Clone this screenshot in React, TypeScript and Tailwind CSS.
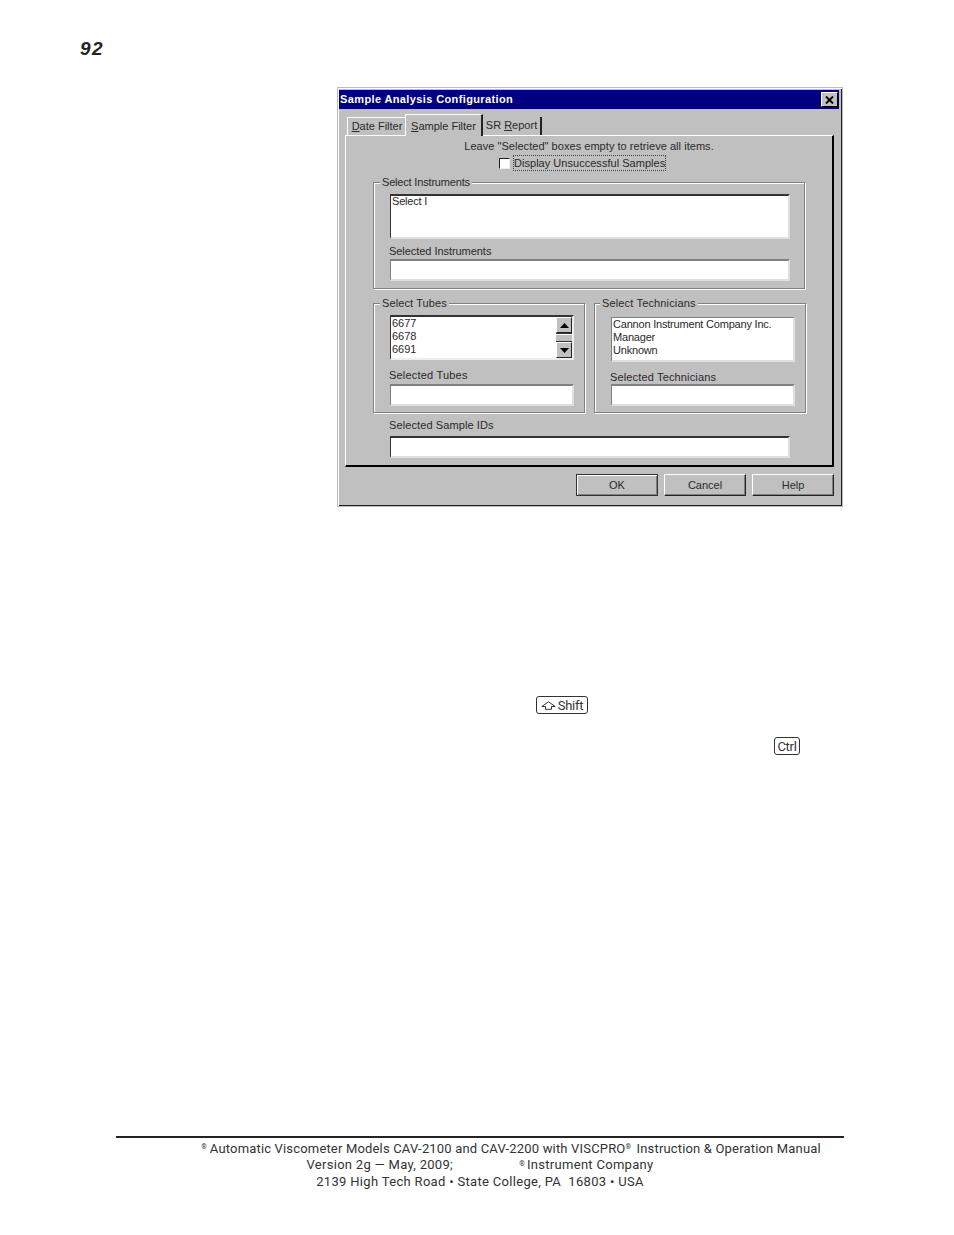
import type { ReactNode } from 'react';

const uiFont = "font-['Liberation_Sans',Arial,sans-serif]";

function Sunken({ className, children }: { className: string; children?: ReactNode }) {
  return (
    <div className={`bg-white border-t-2 border-l border-r-2 border-b-2 border-t-[#333] border-l-[#333] border-r-[#dfdfdf] border-b-[#dfdfdf] overflow-hidden ${className}`}>
      {children}
    </div>
  );
}

function Group({ title, className, legendClass = 'left-[6px]', children }: { title: string; className: string; legendClass?: string; children: ReactNode }) {
  return (
    <div className={`relative border border-[#808080] shadow-[inset_1px_1px_0_#fff,1px_1px_0_#fff] ${className}`}>
      <span className={`absolute -top-[7px] bg-[#c0c0c0] px-[2px] leading-[13px] whitespace-nowrap ${legendClass}`}>{title}</span>
      {children}
    </div>
  );
}

function DlgButton({ label, primary }: { label: string; primary?: boolean }) {
  return (
    <button
      className={`w-[82px] h-[22px] flex items-center justify-center bg-[#c0c0c0] border ${primary ? 'border-[#333] shadow-[inset_1px_1px_0_#fff,inset_-1px_-1px_0_#808080]' : 'border-t-[#fff] border-l-[#fff] border-r-[#222] border-b-[#222] shadow-[inset_-1px_-1px_0_#808080]'}`}
    >
      {label}
    </button>
  );
}

function ScrollBtn({ up }: { up?: boolean }) {
  return (
    <div className="w-[16px] h-[16px] bg-[#c0c0c0] border border-t-white border-l-white border-r-[#222] border-b-[#222] flex items-center justify-center">
      <svg width="9" height="5" viewBox="0 0 9 5" fill="#000">
        <path d={up ? 'M4.5 0 9 5H0z' : 'M0 0h9L4.5 5z'} />
      </svg>
    </div>
  );
}

function Dialog() {
  return (
    <div className={`ml-[337px] mt-[25px] w-[506px] h-[420px] flex flex-col bg-[#c0c0c0] border border-[#bbb] p-[1px] shadow-[inset_1px_1px_0_#fff,inset_-1px_-1px_0_#222] text-[11px] leading-[13px] text-[#2a2a2a] ${uiFont}`}>
      {/* Title bar */}
      <div className="mt-[1px] h-[19px] mr-[2px] flex items-center justify-between bg-[#000080] pl-[1px] pr-[1px]">
        <span className="text-white font-bold tracking-[0.38px]">Sample Analysis Configuration</span>
        <div className="w-[17px] h-[15px] bg-[#c0c0c0] border border-t-white border-l-white border-r-black border-b-black flex items-center justify-center">
          <svg width="9" height="8" viewBox="0 0 9 8" stroke="#000" strokeWidth="1.8">
            <path d="M1 0.5 8 7.5M8 0.5 1 7.5" />
          </svg>
        </div>
      </div>

      {/* Tabs */}
      <div className="ml-[6px] h-[26px] flex items-end relative z-10">
        <div className="ml-[2px] w-[58px] h-[18px] pb-[1px] pl-[1px] flex items-center justify-center border-t border-l border-white whitespace-nowrap">
          <span><span className="underline">D</span>ate Filter</span>
        </div>
        <div className="w-[78px] h-[22px] -mb-[1px] pt-[2px] flex items-center justify-center bg-[#c0c0c0] border-t border-l border-white border-r-2 border-r-[#222] whitespace-nowrap">
          <span><span className="underline">S</span>ample Filter</span>
        </div>
        <div className="w-[59px] h-[18px] pb-[1px] flex items-center justify-center border-r-2 border-r-[#222] whitespace-nowrap">
          <span>SR <span className="underline">R</span>eport</span>
        </div>
      </div>

      {/* Panel */}
      <div className="ml-[6px] w-[489px] h-[332px] border-t border-l border-white border-r-2 border-b-2 border-r-black border-b-black flex flex-col">
        <p className="mt-[4px] text-center tracking-[0.04px]">Leave "Selected" boxes empty to retrieve all items.</p>
        <div className="mt-[2px] ml-[153px] flex items-center gap-[3px]">
          <div className="w-[11px] h-[11px] bg-white border border-t-[#222] border-l-[#222] border-r-[#eee] border-b-[#eee]" />
          <span className="border border-dotted border-[#444] h-[16px] leading-[15px] tracking-[0.03px] whitespace-nowrap">Display Unsuccessful Samples</span>
        </div>

        <Group title="Select Instruments" className="ml-[27px] mt-[11px] w-[432px] h-[107px] pl-[16px] pt-[11px] tracking-[-0.18px]">
          <Sunken className="w-[400px] h-[45px] pl-[1px] leading-[11px]">Select I</Sunken>
          <p className="-ml-[1px] mt-[5px] h-[15px] leading-[15px] tracking-[-0.05px]">Selected Instruments</p>
          <Sunken className="w-[400px] h-[22px] !border-t-[#808080] !border-l-[#808080]" />
        </Group>

        <div className="ml-[27px] mt-[14px] flex gap-[9px]">
          <Group title="Select Tubes" className="w-[212px] h-[110px] pl-[16px] pt-[11px] tracking-[0.1px]">
            <Sunken className="w-[184px] h-[45px] flex !border-r-[#eee] !border-b-[#eee]">
              <div className="flex-1 pl-[1px] leading-[13px] tracking-[0px] overflow-hidden">
                <div>6677</div>
                <div>6678</div>
                <div>6691</div>
                <div>6715</div>
              </div>
              <div className="w-[16px] flex flex-col">
                <ScrollBtn up />
                <div className="flex-1 bg-[#c0c0c0] border-t border-b border-[#333] border-b-dotted shadow-[inset_0_1px_0_#fff]" />
                <ScrollBtn />
              </div>
            </Sunken>
            <p className="-ml-[1px] mt-[8px] h-[14px] leading-[15px] tracking-[0.2px]">Selected Tubes</p>
            <Sunken className="w-[184px] h-[22px] mt-[2px] !border-t-[#808080] !border-l-[#808080]" />
          </Group>
          <Group title="Select Technicians" legendClass="left-[5px]" className="w-[212px] h-[110px] pl-[16px] pt-[13px] tracking-[0.15px]">
            <Sunken className="w-[184px] h-[45px] pl-[1px] !border-t !border-t-[#808080] !border-l-[#808080] tracking-[-0.2px]">
              <div>Cannon Instrument Company Inc.</div>
              <div>Manager</div>
              <div>Unknown</div>
            </Sunken>
            <p className="-ml-[1px] mt-[8px] h-[14px] leading-[15px] tracking-[0.15px]">Selected Technicians</p>
            <Sunken className="w-[184px] h-[22px] !border-t-[#808080] !border-l-[#808080]" />
          </Group>
        </div>

        <p className="ml-[43px] mt-[5px] h-[15px] leading-[15px] tracking-[0.1px]">Selected Sample IDs</p>
        <Sunken className="ml-[44px] mt-[3px] w-[400px] h-[22px]" />
      </div>

      {/* Buttons */}
      <div className="mt-[7px] ml-[237px] flex gap-[6px]">
        <DlgButton label="OK" primary />
        <DlgButton label="Cancel" />
        <DlgButton label="Help" />
      </div>
    </div>
  );
}

export default function App() {
  return (
    <div className={`w-[954px] h-[1235px] bg-white flex flex-col overflow-hidden ${uiFont}`}>
      <p className="ml-[80px] mt-[39px] h-[23px] text-[19px] leading-[19px] font-bold italic tracking-[1.5px] text-[#222]">92</p>
      <Dialog />

      {/* Key caps */}
      <div className="ml-[536px] mt-[189px] h-[18px] w-[52px] flex items-center justify-center gap-[2px] border border-[#333] rounded-[3px]">
        <svg width="15" height="9" viewBox="0 0 15 9" fill="none" stroke="#333" strokeWidth="1">
          <path d="M0.8 5.5 7.5 0.8 14.2 5.5H10.5V8.3H4.5V5.5z" />
        </svg>
        <span className="font-['Roboto',sans-serif] text-[13px] leading-[13px] text-[#333] tracking-[-0.3px]">Shift</span>
      </div>
      <div className="ml-[774px] mt-[23px] w-[26px] h-[18px] flex items-center justify-center border border-[#333] rounded-[3px]">
        <span className="font-['Roboto',sans-serif] text-[13px] leading-[13px] text-[#333] tracking-[-0.3px]">Ctrl</span>
      </div>

      {/* Footer */}
      <div className="mt-auto mb-[45px] ml-[116px] w-[728px] border-t-2 border-[#222] pt-[3px] text-[13px] leading-[16.5px] text-[#333] text-center font-['Roboto',sans-serif]">
        <p className="pl-[62px] whitespace-nowrap tracking-[0.17px]">
          <sup className="text-[7px] mr-[3px]">®</sup>Automatic Viscometer Models CAV-2100 and CAV-2200 with VISCPRO<sup className="text-[7px] mr-[2px]">®</sup> Instruction &amp; Operation Manual
        </p>
        <p className="whitespace-nowrap tracking-[0.3px]">
          Version 2g — May, 2009;<span className="inline-block w-[66px]" /><sup className="text-[7px] mr-[2px]">®</sup>Instrument Company
        </p>
        <p className="whitespace-nowrap tracking-[0.32px]">2139 High Tech Road • State College, PA&nbsp;&nbsp;16803 • USA</p>
      </div>
    </div>
  );
}
